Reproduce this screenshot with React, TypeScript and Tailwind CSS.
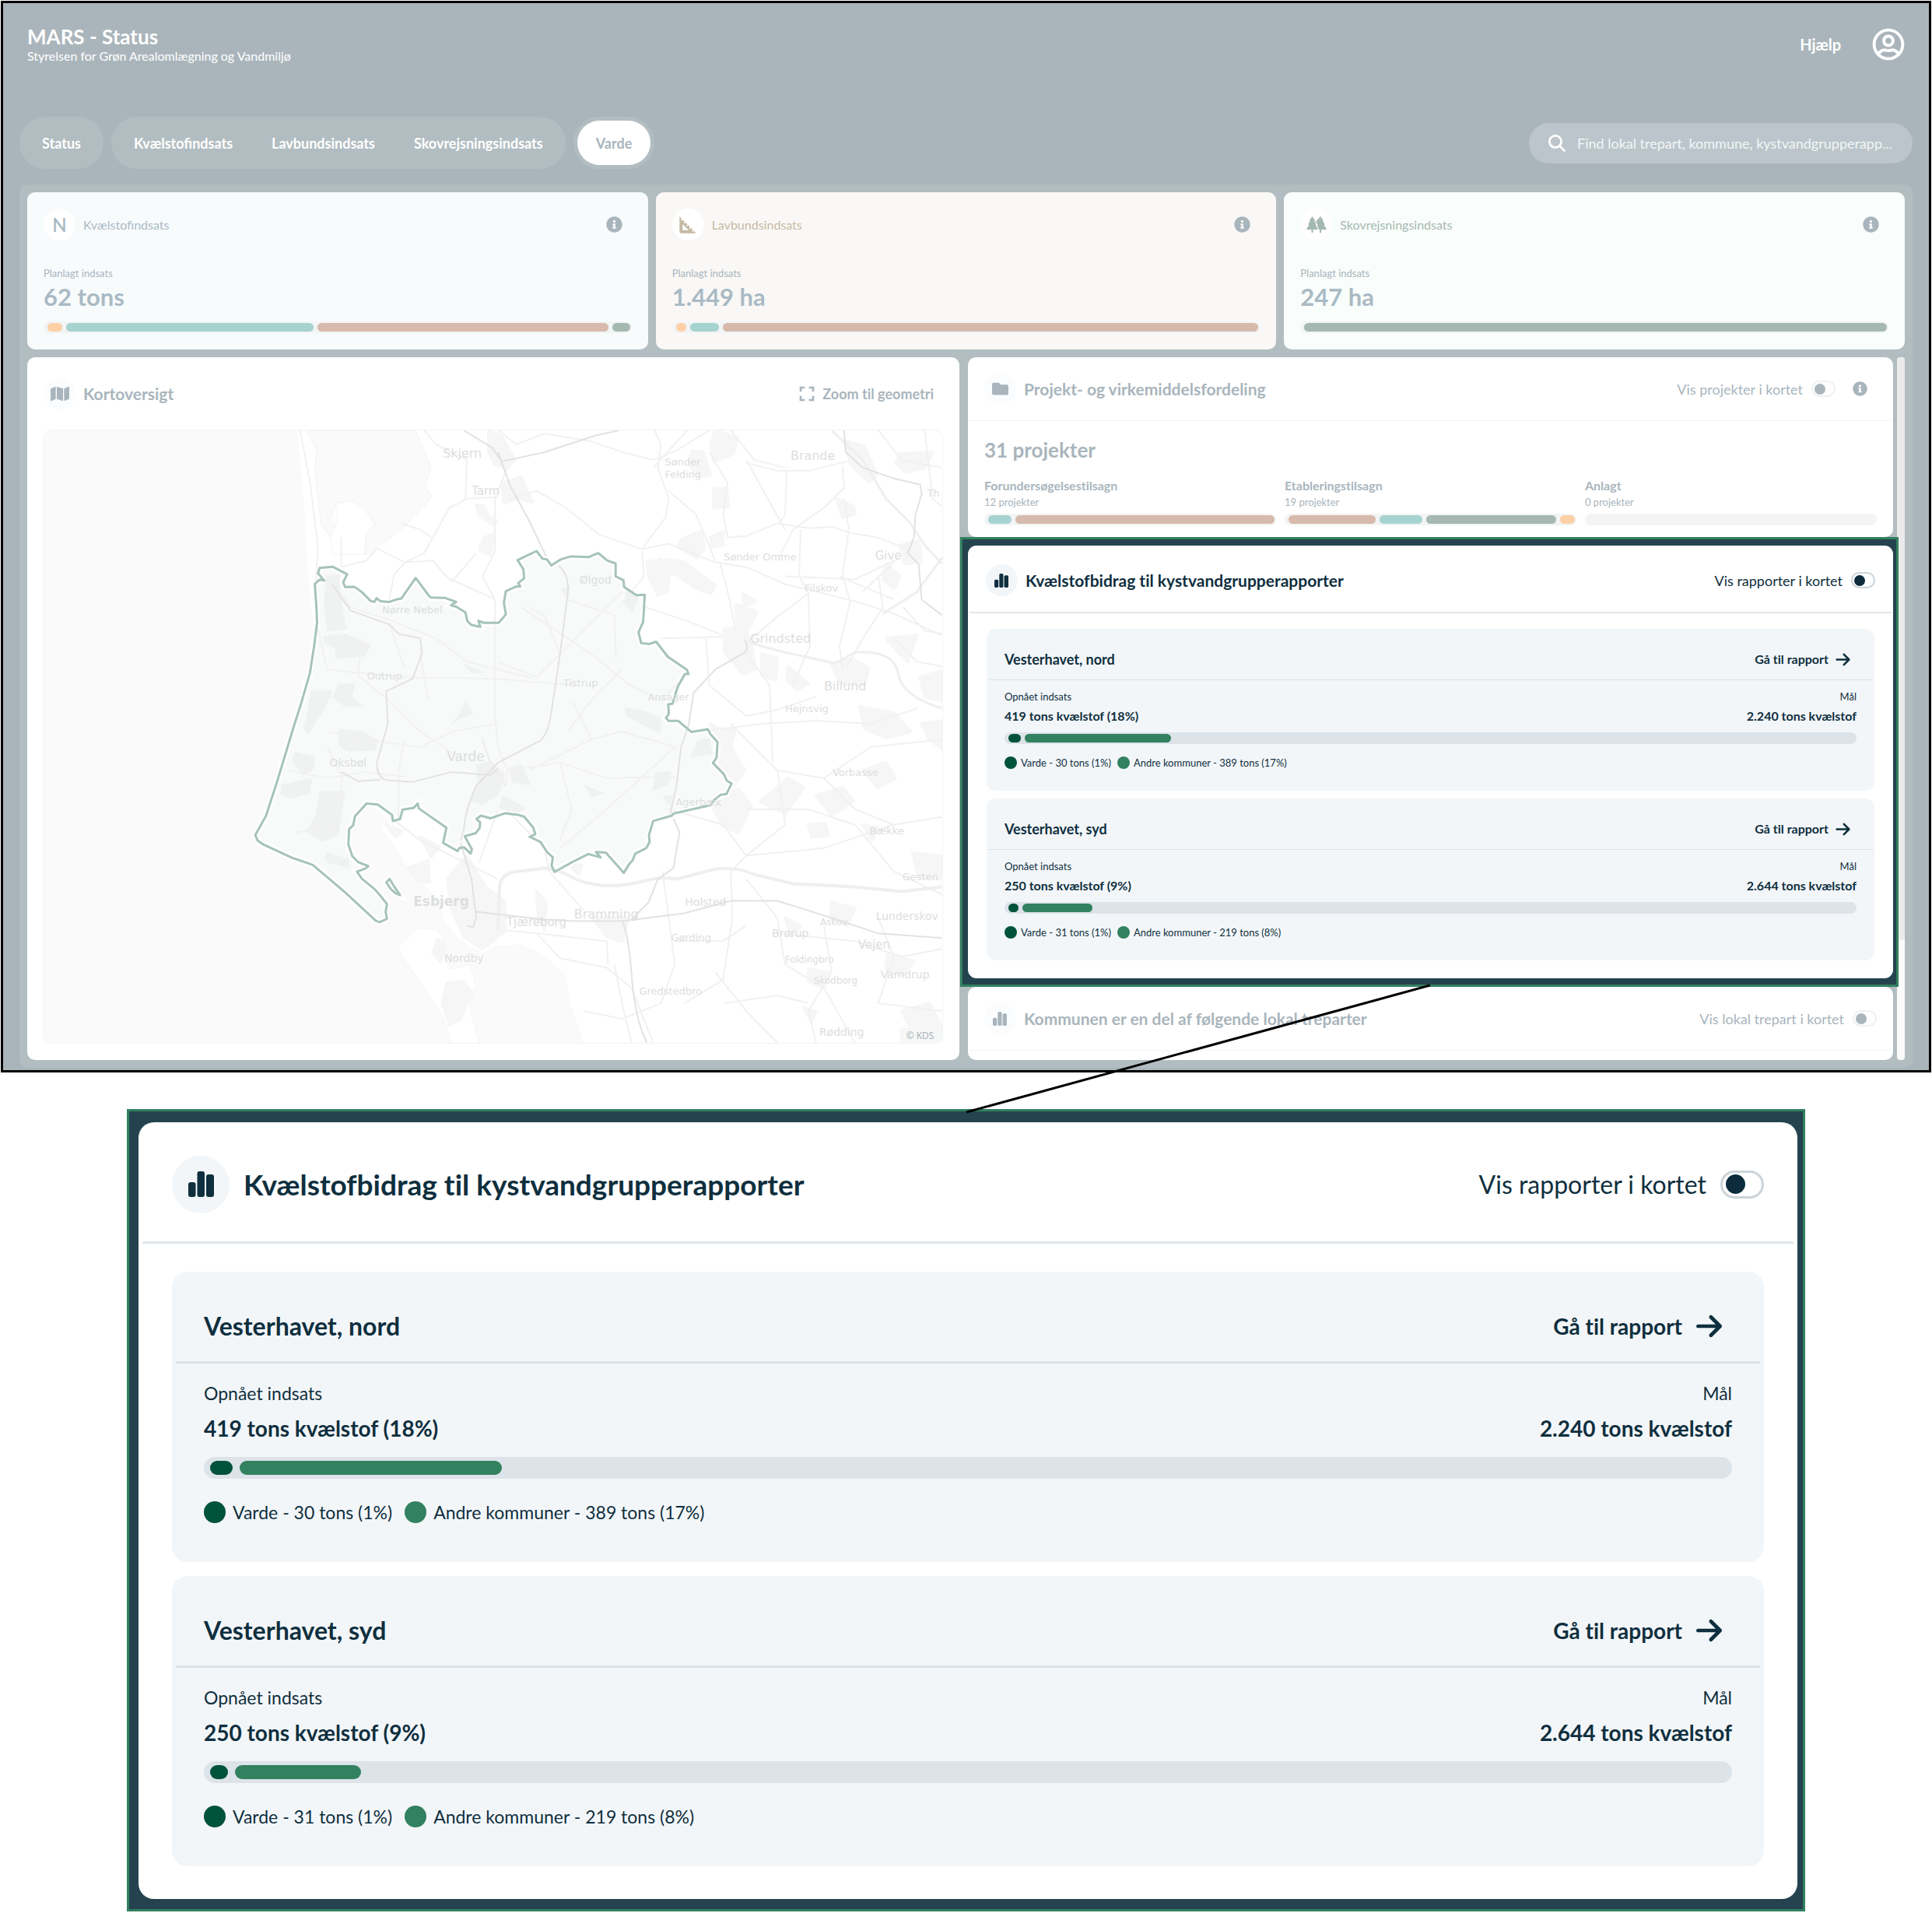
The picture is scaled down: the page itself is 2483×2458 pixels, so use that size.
import type { ReactNode } from 'react';
import clsx from 'clsx';
import { FaFolder, FaInfoCircle, FaMap, FaRegUserCircle } from 'react-icons/fa';
import { FaArrowRight, FaMagnifyingGlass } from 'react-icons/fa6';
import { MdFullscreen, MdSquareFoot } from 'react-icons/md';

type Segment = { share: number; color: string };

const SAND = 'bg-[#fdd0a6]';
const TEAL = 'bg-[#a6d3cf]';
const CLAY = 'bg-[#d7baab]';
const MOSS = 'bg-[#a5b9b0]';

const efforts = [
  {
    title: 'Kvælstofindsats',
    value: '62 tons',
    card: 'bg-[#f8fbfc]',
    tone: 'text-[#a9bac4]',
    icon: <span className="text-2xl font-semibold">N</span>,
    segments: [
      { share: 19, color: SAND },
      { share: 317, color: TEAL },
      { share: 373, color: CLAY },
      { share: 23, color: MOSS },
    ],
  },
  {
    title: 'Lavbundsindsats',
    value: '1.449 ha',
    card: 'bg-[#faf8f6]',
    tone: 'text-[#c5b9a4]',
    icon: <MdSquareFoot className="size-8" />,
    segments: [
      { share: 13, color: SAND },
      { share: 37, color: TEAL },
      { share: 686, color: CLAY },
    ],
  },
  {
    title: 'Skovrejsningsindsats',
    value: '247 ha',
    card: 'bg-[#f9fdfb]',
    tone: 'text-[#a5b9b0]',
    icon: <PinesIcon className="h-[21px] w-[26px]" />,
    segments: [{ share: 1, color: MOSS }],
  },
];

const phases: { title: string; count: string; segments: Segment[] }[] = [
  {
    title: 'Forundersøgelsestilsagn',
    count: '12 projekter',
    segments: [
      { share: 30, color: TEAL },
      { share: 333, color: CLAY },
    ],
  },
  {
    title: 'Etableringstilsagn',
    count: '19 projekter',
    segments: [
      { share: 112, color: CLAY },
      { share: 55, color: TEAL },
      { share: 167, color: MOSS },
      { share: 19, color: SAND },
    ],
  },
  { title: 'Anlagt', count: '0 projekter', segments: [] },
];

const reports = [
  {
    name: 'Vesterhavet, nord',
    reached: '419 tons kvælstof (18%)',
    goal: '2.240 tons kvælstof',
    own: 'Varde - 30 tons (1%)',
    others: 'Andre kommuner - 389 tons (17%)',
    ownShare: 1.5,
    othersShare: 17.3,
  },
  {
    name: 'Vesterhavet, syd',
    reached: '250 tons kvælstof (9%)',
    goal: '2.644 tons kvælstof',
    own: 'Varde - 31 tons (1%)',
    others: 'Andre kommuner - 219 tons (8%)',
    ownShare: 1.2,
    othersShare: 8.3,
  },
];

function BarsIcon({ className }: { className?: string }) {
  return (
    <svg viewBox="0 0 33 33" fill="currentColor" className={className} aria-hidden="true">
      <rect x="0" y="14" width="9.5" height="19" rx="3" />
      <rect x="11.5" y="0" width="9.5" height="33" rx="3" />
      <rect x="23" y="4" width="10" height="29" rx="3" />
    </svg>
  );
}

function PinesIcon({ className }: { className?: string }) {
  return (
    <svg viewBox="0 0 26 21" fill="currentColor" className={className} aria-hidden="true">
      <path d="M7.5 0 L11.5 5.5 H10 L13 10.5 H11.5 L15 17 H8.5 V21 H6.5 V17 H0 L3.5 10.5 H2 L5 5.5 H3.5 Z" />
      <path d="M18 0 L22 5.5 H20.5 L24 10.5 H22.5 L26 17 H19 V21 H17 V17 H16.2 L13.4 11.5 H15 L11.8 6.3 H13.3 L12.9 5.8 Z" />
    </svg>
  );
}

function SegmentBar({ segments }: { segments: Segment[] }) {
  return (
    <div className="flex h-[15px] gap-[5px] rounded-full bg-[#f2f4f5] py-[2px] pr-[2px] pl-[5px]">
      {segments.map((s, i) => (
        <div
          key={i}
          className={clsx('basis-0 rounded-full', s.color)}
          style={{ flexGrow: s.share }}
        />
      ))}
    </div>
  );
}

function Toggle({ label, large, faded }: { label: string; large?: boolean; faded?: boolean }) {
  return (
    <label
      className={clsx(
        'flex items-center',
        large ? 'gap-[18px] text-[32px]' : 'gap-[11px] text-lg',
      )}
    >
      {label}
      <input
        type="checkbox"
        role="switch"
        className={clsx(
          'flex appearance-none items-center rounded-full before:rounded-full',
          large
            ? 'h-9 w-14 border-[3px] px-1 before:size-[25px]'
            : 'h-[21px] w-[31px] border-2 px-[2px] before:size-[14px]',
          faded
            ? 'border-[#eef1f2] before:bg-[#a9b5bc]'
            : 'border-[#ccd4d9] before:bg-[#0c2c3c]',
        )}
      />
    </label>
  );
}

function PanelHeader({
  icon,
  title,
  children,
  className,
}: {
  icon: ReactNode;
  title: string;
  children?: ReactNode;
  className?: string;
}) {
  return (
    <div className={clsx('flex items-center justify-between pl-[21px]', className)}>
      <div className="flex items-center gap-[10px]">
        <span className="flex size-[41px] items-center justify-center rounded-full bg-[#fbfcfe]">
          {icon}
        </span>
        <h2 className="text-[21px] font-bold">{title}</h2>
      </div>
      {children}
    </div>
  );
}

function ReportPanel({ large = false }: { large?: boolean }) {
  return (
    <section
      className={clsx(
        'border-[3px] border-[#32815f] bg-[#24434f] text-[#0f2f3e]',
        large ? 'pt-[14px] pr-[7px] pb-[13px] pl-3' : 'pt-2 pr-1 pb-2 pl-[7px]',
      )}
    >
      <div
        className={clsx(
          'bg-white',
          large ? 'rounded-[20px] pb-[42px]' : 'rounded-[11px] pb-[23px]',
        )}
      >
        <div
          className={clsx(
            'flex items-center justify-between border-[#e0e6ea]',
            large
              ? 'mx-[5px] h-[156px] border-b-[3px] px-[38px] pt-[6px]'
              : 'mx-[2px] h-[87px] border-b-2 px-[21px] pt-1',
          )}
        >
          <div className={clsx('flex items-center', large ? 'gap-[18px]' : 'gap-[10px]')}>
            <span
              className={clsx(
                'flex items-center justify-center rounded-full bg-[#f3f6f9]',
                large ? 'size-[74px]' : 'size-[41px]',
              )}
            >
              <BarsIcon className={large ? 'size-[33px]' : 'size-[18px]'} />
            </span>
            <h2 className={clsx('font-bold', large ? 'text-[37px]' : 'text-[21px]')}>
              Kvælstofbidrag til kystvandgrupperapporter
            </h2>
          </div>
          <Toggle label="Vis rapporter i kortet" large={large} />
        </div>

        <div
          className={clsx(
            'flex flex-col',
            large ? 'gap-[18px] px-[43px] pt-9' : 'gap-[10px] px-6 pt-5',
          )}
        >
          {reports.map((r) => (
            <ReportCard key={r.name} report={r} large={large} />
          ))}
        </div>
      </div>
    </section>
  );
}

function ReportCard({ report, large }: { report: (typeof reports)[number]; large: boolean }) {
  const small = large ? 'text-[23px] leading-9' : 'text-[13px] leading-5';
  const strong = large ? 'text-[28px] leading-[54px]' : 'text-base leading-[30px]';
  const dot = large ? 'size-7' : 'size-4';

  return (
    <article
      className={clsx(
        'bg-[#f3f6f9]',
        large ? 'rounded-[20px] pb-[46px]' : 'rounded-[11px] pb-[26px]',
      )}
    >
      <div
        className={clsx(
          'flex items-center justify-between border-[#dbe2e7]',
          large
            ? 'mx-[5px] h-[118px] border-b-[3px] pt-[25px] pr-[49px] pl-9'
            : 'mx-[2px] h-[66px] border-b pt-[13px] pr-[29px] pl-[21px]',
        )}
      >
        <h3 className={clsx('font-bold', large ? 'text-[32px]' : 'text-lg')}>{report.name}</h3>
        <a
          href="#rapport"
          className={clsx(
            'flex items-center font-bold',
            large ? 'gap-[18px] text-[28px]' : 'gap-[9px] text-base',
          )}
        >
          Gå til rapport
          <FaArrowRight className={large ? 'h-[38px] w-[33px]' : 'h-[21px] w-[19px]'} />
        </a>
      </div>

      <div className={large ? 'px-[41px] pt-5' : 'px-[23px] pt-[11px]'}>
        <div className={clsx('flex justify-between', small)}>
          <span>Opnået indsats</span>
          <span>Mål</span>
        </div>
        <div className={clsx('flex justify-between font-bold', strong)}>
          <span>{report.reached}</span>
          <span>{report.goal}</span>
        </div>
        <div
          className={clsx(
            'flex rounded-full bg-[#dce3e9]',
            large ? 'mt-[10px] h-7 gap-[9px] px-2 py-[5px]' : 'mt-[6px] h-[15px] gap-[5px] px-[5px] py-[2px]',
          )}
        >
          <div className="rounded-full bg-[#00533b]" style={{ width: `${report.ownShare}%` }} />
          <div className="rounded-full bg-[#32815f]" style={{ width: `${report.othersShare}%` }} />
        </div>
        <div
          className={clsx(
            'flex items-center',
            small,
            large ? 'mt-[25px] gap-4' : 'mt-[14px] gap-2',
          )}
        >
          <span className={clsx('flex items-center', large ? 'gap-[9px]' : 'gap-[5px]')}>
            <i className={clsx('rounded-full bg-[#00533b]', dot)} />
            {report.own}
          </span>
          <span className={clsx('flex items-center', large ? 'gap-[9px]' : 'gap-[5px]')}>
            <i className={clsx('rounded-full bg-[#32815f]', dot)} />
            {report.others}
          </span>
        </div>
      </div>
    </article>
  );
}

const places: [string, number, number, number][] = [
  ['Skjern', 569, 587, 16],
  ['Tarm', 606, 635, 15],
  ['Nørre Nebel', 491, 788, 13],
  ['Outrup', 471, 873, 13],
  ['Oksbøl', 423, 985, 14],
  ['Varde', 574, 978, 17],
  ['Ølgod', 745, 750, 14],
  ['Tistrup', 724, 882, 13],
  ['Ansager', 833, 900, 13],
  ['Agerbæk', 869, 1035, 13],
  ['Nordby', 571, 1237, 14],
  ['Tjæreborg', 651, 1191, 15],
  ['Bramming', 738, 1181, 16],
  ['Holsted', 881, 1165, 14],
  ['Gørding', 863, 1210, 13],
  ['Gredstedbro', 822, 1279, 13],
  ['Sønder', 855, 597, 13],
  ['Felding', 855, 613, 13],
  ['Brande', 1017, 590, 16],
  ['Th', 1193, 637, 13],
  ['Sønder Omme', 931, 719, 13],
  ['Give', 1126, 718, 15],
  ['Filskov', 1035, 760, 13],
  ['Grindsted', 965, 826, 16],
  ['Billund', 1060, 887, 16],
  ['Hejnsvig', 1010, 915, 13],
  ['Vorbasse', 1071, 997, 13],
  ['Bække', 1119, 1072, 13],
  ['Gesten', 1161, 1131, 13],
  ['Lunderskov', 1127, 1183, 14],
  ['Askov', 1055, 1190, 12],
  ['Brørup', 993, 1205, 14],
  ['Vejen', 1104, 1220, 15],
  ['Foldingbro', 1010, 1238, 12],
  ['Skodborg', 1047, 1265, 12],
  ['Vamdrup', 1133, 1258, 14],
  ['Rødding', 1054, 1332, 14],
];

const municipality =
  'M247 115 L262 102 L276 105 L257 83 L262 67 L303 64 L346 86 L334 110 L340 124 L368 123 L390 138 L418 165 L430 168 L436 157 L448 166 L475 168 L500 160 L512 158 L556 97 L595 148 L602 155 L645 156 L680 168 L664 178 L680 182 L708 199 L714 224 L725 236 L754 242 L748 224 L765 230 L810 230 L822 217 L832 205 L826 170 L832 136 L865 122 L876 122 L870 112 L888 98 L886 72 L868 44 L926 17 L944 40 L958 42 L971 60 L1000 42 L1030 33 L1085 35 L1115 23 L1142 45 L1168 54 L1168 92 L1192 104 L1194 124 L1232 148 L1257 147 L1254 200 L1252 228 L1238 258 L1246 290 L1270 293 L1292 286 L1328 331 L1386 369 L1391 382 L1380 382 L1358 420 L1342 470 L1329 472 L1331 500 L1322 512 L1330 521 L1360 521 L1400 554 L1450 546 L1458 560 L1480 584 L1477 630 L1466 646 L1500 680 L1508 698 L1523 707 L1507 738 L1490 740 L1470 755 L1458 771 L1345 796 L1340 802 L1283 818 L1270 860 L1272 880 L1262 898 L1228 915 L1220 935 L1210 945 L1193 972 L1175 952 L1138 912 L1108 910 L1122 926 L1084 916 L1035 940 L981 969 L972 950 L976 926 L958 910 L938 880 L905 865 L922 857 L916 838 L888 805 L870 800 L830 795 L785 810 L756 802 L742 812 L753 822 L752 838 L740 854 L706 863 L728 902 L724 915 L704 896 L690 898 L684 907 L640 883 L650 838 L566 781 L562 766 L550 779 L516 784 L508 812 L486 818 L484 800 L440 769 L406 766 L370 804 L365 830 L352 842 L350 888 L362 922 L380 940 L411 952 L400 960 L376 968 L392 990 L430 1020 L448 1040 L468 1064 L464 1088 L468 1108 L446 1118 L434 1114 L340 1030 L272 974 L240 948 L180 928 L90 888 L72 876 L65 860 L98 802 L132 700 L182 540 L205 470 L232 380 L245 300 L254 230 L252 180 Z M466 1000 L476 990 L486 1006 L508 1038 L494 1032 L480 1020 Z';

function RegionMap() {
  return (
    <svg
      viewBox="55 552 1158 789"
      preserveAspectRatio="xMidYMid slice"
      className="block h-[789px] w-full rounded-[10px] border border-[#f1f5f4]"
      role="img"
      aria-label="Kort over Varde Kommune"
    >
      {/* sea and fjords */}
      <path
        fill="#fafafa"
        d="M55 552 H381 L386 600 L392 670 L394 720 L400 780 L404 830 L399 830 L402 870 L398 900 L380 1000 L345 1060 L327 1073 L401 1112 L483 1184 L497 1180 L490 1150 L460 1120 L447 1085 L447 1065 L470 1033 L505 1055 L492 1062 L492 1070 L505 1085 L520 1110 L550 1142 L566 1160 L570 1182 L590 1208 L620 1225 L637 1216 L670 1214 L696 1226 L727 1252 L733 1290 L740 1310 L751 1341 H55 Z"
      />
      <path
        fill="#fafafa"
        stroke="#f3f3f3"
        d="M393 552 L406 577 L404 605 L408 640 L412 673 L422 687 L427 700 L430 672 L424 668 L432 645 L455 643 L468 650 L482 672 L470 690 L469 712 L480 712 L484 703 L516 680 L543 652 L555 637 L546 624 L554 600 L543 574 L534 552 Z"
      />
      <path
        fill="#fff"
        stroke="#f4f4f4"
        d="M433 646 L452 643 L466 652 L480 672 L470 686 L468 712 L428 712 L424 690 L432 672 Z M512 1217 L536 1193 L560 1195 L570 1208 L566 1222 L580 1246 L604 1240 L611 1266 L603 1295 L616 1341 H580 L570 1308 L540 1262 L516 1230 Z"
      />

      {/* woods and built-up areas */}
      <g fill="#f6f6f6" stroke="#f6f6f6" strokeWidth="4" strokeLinejoin="round">
        <path d="M628 552 L645 560 L662 590 L652 600 L636 596 L628 580 Z M645 620 L670 612 L684 644 L664 640 L648 646 Z" />
        <path d="M612 648 L622 650 L628 664 L638 668 L636 674 L616 662 Z M622 690 L634 686 L630 712 L616 706 Z" />
        <path d="M920 552 L948 562 L944 582 L918 592 L914 570 Z M890 578 L905 580 L914 610 L898 612 L886 596 Z" />
        <path d="M918 628 L934 626 L938 650 L918 652 Z M876 692 L902 682 L906 704 L896 716 L872 702 Z M914 690 L930 682 L930 700 L916 702 Z" />
        <path d="M832 722 L850 718 L862 730 L880 740 L862 736 L858 760 L846 764 L834 740 Z M856 718 L880 722 L920 752 L914 762 L896 756 L876 742 Z" />
        <path d="M932 808 L958 806 L966 826 L972 860 L956 866 L932 838 Z M946 776 L974 786 L962 808 L948 804 Z M955 762 L972 772 L958 778 Z" />
        <path d="M980 840 L1000 846 L998 874 L980 868 Z M1014 856 L1040 878 L1026 886 L1012 874 Z M1070 852 L1096 846 L1118 858 L1112 880 L1080 878 Z" />
        <path d="M1088 566 L1112 572 L1128 610 L1118 618 L1094 596 Z M1158 582 L1200 580 L1190 600 L1166 606 L1152 594 Z M1158 700 L1182 694 L1186 722 L1164 724 Z" />
        <path d="M1076 640 L1098 650 L1100 660 L1084 664 Z M1140 724 L1158 740 L1150 756 L1136 744 Z M1140 820 L1180 816 L1168 850 L1154 836 Z M1184 870 L1212 862 V900 L1190 896 Z" />
        <path d="M1106 908 L1150 916 L1172 940 L1140 948 L1112 936 Z M1186 930 L1212 926 V962 L1196 950 Z" />
        <path d="M914 930 L930 940 L946 936 L940 960 L958 990 L944 1010 L930 990 L918 960 Z M912 1030 L950 1014 L966 1036 L950 1070 L930 1062 Z M978 1030 L1014 1000 L1034 1012 L1010 1046 Z" />
        <path d="M1050 1022 L1084 1012 L1098 1030 L1070 1048 Z M1110 990 L1140 980 L1152 1000 L1130 1012 Z M1040 1060 L1062 1058 L1066 1074 L1044 1076 Z" />
        <path d="M1174 1096 L1212 1100 V1130 L1182 1128 Z M1070 1160 L1100 1168 L1090 1190 L1068 1180 Z M1010 1180 L1030 1190 L1018 1204 Z M1110 1060 L1130 1064 L1122 1080 Z" />
        <path d="M1142 1226 L1176 1236 L1160 1254 L1140 1246 Z M1040 1246 L1066 1250 L1060 1270 L1040 1262 Z M1160 1300 L1196 1290 L1212 1320 L1176 1330 Z M1034 1296 L1050 1300 L1044 1314 Z" />
        <path d="M575 1130 L600 1100 L624 1140 L648 1158 L650 1196 L620 1220 L596 1204 L580 1168 Z M524 1116 L550 1106 L552 1134 L536 1132 Z" />
        <path d="M540 1076 L564 1088 L554 1102 Z M690 1146 L702 1160 L700 1196 L692 1180 Z M762 1180 L808 1180 L800 1210 L780 1204 Z M496 1060 L516 1068 L508 1076 Z" />
        <path d="M574 1264 L594 1262 L606 1276 L592 1310 L578 1318 L568 1290 Z M562 1208 L574 1214 L566 1236 L556 1226 Z M730 1110 L748 1112 L744 1124 Z" />
      </g>

      {/* municipality */}
      <g transform="translate(300 700) scale(.4209 .4342)">
        <path d={municipality} fill="#f8faf9" stroke="#fff" strokeWidth="8" vectorEffect="non-scaling-stroke" />
        <g fill="#f0f2f1">
          <path d="M280 90 L322 85 L325 140 L345 250 L285 255 L275 180 Z M273 270 L340 262 L420 295 L400 330 L310 338 L308 305 L276 290 Z" />
          <path d="M236 430 L302 430 L275 490 L228 560 L212 545 L225 490 Z M320 410 L372 410 L360 450 L400 480 L340 480 L300 450 Z M320 545 L390 552 L445 580 L430 610 L345 612 L318 590 Z" />
          <path d="M186 612 L250 628 L240 670 L212 684 L178 640 Z M145 710 L240 690 L232 738 L170 752 L142 736 Z M262 730 L340 728 L320 860 L270 880 L220 850 L250 800 Z M280 910 L350 930 L352 958 L280 940 Z" />
          <path d="M710 460 L732 500 L690 515 L658 538 L690 500 Z M700 350 L766 378 L730 382 Z M1195 480 L1250 490 L1305 510 L1308 560 L1245 530 L1200 505 Z M1000 130 L1030 120 L1020 160 Z" />
          <path d="M740 650 L790 640 L830 680 L810 740 L760 770 L720 760 L745 700 Z M840 660 L880 650 L910 712 L850 705 Z M820 740 L895 780 L870 795 L810 780 Z M1290 672 L1340 670 L1330 710 L1280 730 Z M1070 710 L1135 735 L1095 748 Z" />
          <path d="M1200 130 L1240 150 L1220 200 L1196 180 Z M1395 630 L1420 580 L1455 570 L1465 620 Z M1310 745 L1345 740 L1335 775 Z" />
        </g>
      </g>

      {/* local roads */}
      <g fill="none" stroke="#f1f1f1" strokeWidth="2" strokeLinejoin="round">
        <path d="M385 552 L398 620 L408 700 L405 760 M438 690 V728 L470 720 L484 704 L520 722 L556 720 L575 742 L620 762 L636 770 M500 770 L506 738 L520 722 L545 710 L577 652 L600 640 L640 638" />
        <path d="M545 552 L560 570 L600 590 L598 640 M516 672 L540 680 L557 692 M640 552 L664 570 L700 556 L760 566 L800 580 L840 590 L870 578 L912 552 M636 640 L652 600" />
        <path d="M636 640 L636 708 L620 740 L636 770 V920 L640 960 L652 990 L650 1010 M612 710 L580 748 M655 640 L690 630 L728 652 L770 686 L825 705 L860 698 L920 722 L960 728 L1010 750 L1100 772 L1150 788 L1212 816" />
        <path d="M842 552 L850 570 L846 600 L860 640 L856 664 L826 704 M860 630 L895 660 L920 720 M935 690 L960 688 L1000 672 L1040 678 L1070 676 L1094 684 L1130 690 L1170 706 M884 552 L840 600" />
        <path d="M912 580 L936 620 L930 660 L936 690 M960 590 L1010 680 M960 594 L1000 604 L1040 604 L1090 592 M1084 598 L1086 626 L1062 650 L1020 680 L1000 720 M1012 604 L1010 660 L1002 672" />
        <path d="M1030 680 L1028 740 L1040 762 L1042 830 L1020 880 M1086 640 L1092 680 L1084 740 L1094 772 L1080 830 L1084 860 M1130 740 L1136 780 L1110 820 L1090 856" />
        <path d="M926 722 L938 768 L946 810 M960 826 L1000 792 L1040 762 M850 820 L930 818 M826 708 L828 740 L796 780 M830 780 L880 796 L930 816 M1010 740 L1100 744 L1158 716 M1080 740 L1150 770" />
        <path d="M908 820 L912 880 L960 920 L1000 912 L1050 895 M960 840 L990 880 L994 980 M900 940 L980 930 L1050 926 L1120 930 L1180 910 M940 930 L1000 990 L1060 1000 L1120 960 L1212 950" />
        <path d="M1060 1000 L1100 1040 L1150 1060 L1212 1050 M960 1040 L1040 1040 L1100 1060 L1150 1120 L1212 1150 M1000 990 L1010 1060 L960 1100 L940 1120 M860 1040 L930 1060 L960 1100 L1060 1090 L1150 1060" />
        <path d="M1150 820 L1180 850 L1212 856 M1162 780 L1190 810 L1212 814 M1150 722 L1110 760 M1130 552 L1160 590 L1212 600 M1190 552 L1200 640 L1212 650 M940 552 L970 590 L1010 600" />
        <path d="M500 1050 L540 1080 L600 1110 L640 1130 M616 1108 L640 1040 M650 1040 L700 1090 L706 1120 L750 1170 M650 1196 L690 1200 L720 1232 L780 1244 L812 1270 L840 1341 M690 1200 L780 1210 L782 1240" />
        <path d="M852 1120 L860 1180 L868 1240 L850 1290 L800 1310 L750 1300 M868 1210 L930 1210 L960 1190 M940 1120 L942 1180 L930 1260 L880 1290 M790 1240 L800 1290 L812 1341 M920 1250 L960 1300 L1000 1341" />
        <path d="M960 1130 L1000 1180 L1010 1240 L1060 1270 L1100 1341 M1000 1200 L1100 1210 L1160 1230 L1212 1220 M1060 1190 L1070 1250 L1040 1300 L1050 1341 M1130 1180 L1150 1230 L1130 1290 L1212 1300 M930 1290 L1000 1280 L1040 1290" />
        <path d="M406 800 L420 860 L520 870 L640 872 L736 880 M430 750 L450 780 L500 796 L560 820 L600 850 L680 870 M500 800 L520 860 M464 820 L460 868 L500 900 L540 940 L600 980 M540 840 L550 900 M640 850 L690 870 L720 840 L800 760" />
        <path d="M670 780 L760 840 L810 880 L850 900 L880 870 M730 770 L790 790 L792 846 M736 900 L760 950 L800 940 L870 960 M680 990 L760 950 M652 990 L720 980 L780 1000 L868 998 M868 960 L780 1040 L720 1090 M720 980 L735 1040 L720 1080" />
        <path d="M640 930 L580 940 L540 960 L470 950 L420 940 M512 1060 V990 L520 950 M720 840 L700 790 L680 780 M800 860 L760 900 L730 940 M420 960 L440 1000 L430 1060 L380 1070 M370 990 L420 1000 L470 992 L520 998" />
      </g>

      {/* trunk roads */}
      <g fill="none" stroke="#efefef" strokeWidth="4" strokeLinejoin="round">
        <path d="M640 1196 L642 1140 Q644 1124 660 1121 L700 1116 Q720 1118 740 1130 Q780 1146 830 1132 Q850 1126 870 1130 L920 1117 Q950 1114 970 1124 L1020 1136 L1100 1140 L1160 1146 L1212 1140" />
        <path d="M1070 552 L1110 590 L1140 640 L1170 670 L1190 700 L1212 724 M965 826 L1010 838 L1074 852 L1100 838 Q1150 834 1156 866 Q1160 894 1212 910" strokeWidth="3" />
        <path d="M1212 716 L1180 760 L1136 788 M650 1010 L630 980 L620 950" strokeWidth="3" />
      </g>

      {/* railways */}
      <g fill="none" stroke="#e2e2e2" strokeWidth="2" strokeLinejoin="round">
        <path d="M596 552 L632 574 L645 592 L700 580 L768 558 L796 552 M640 580 L656 624 L680 668 L702 714" />
        <path d="M718 726 Q732 738 730 762 L720 840 L708 920 Q704 944 694 952 L640 980 L612 1010 Q598 1040 596 1066 L592 1080 M592 1084 L606 1130 L612 1180 L608 1192 L600 1190" />
        <path d="M426 750 L450 784 L500 802 L512 814 L540 820 L542 840 L530 872 L496 888 L498 930 L484 980 Q484 1002 500 1003 L530 1005 L580 992 L630 996 L640 988 M438 992 L460 1004 L488 1002" />
        <path d="M612 1172 L700 1182 L740 1184 L800 1184 L880 1174 L940 1158 L1000 1158 L1070 1180 L1130 1200 L1212 1206 M800 1184 Q808 1200 812 1250 Q816 1310 832 1341 M812 1182 L834 1160 L846 1130 L866 1116 L874 1070 L866 1052" />
        <path d="M862 1046 L870 1010 L876 960 L886 930 L892 890 L920 860 L958 838 Q964 832 958 822 M1086 552 L1088 580 L1110 600 L1150 614 L1184 622 L1186 634 L1178 660 L1176 690 L1168 710 L1182 724 L1186 770 L1212 790" />
      </g>

      <g transform="translate(300 700) scale(.4209 .4342)">
        <path d={municipality} fill="none" stroke="#a6c3b9" strokeWidth="3" strokeLinejoin="round" vectorEffect="non-scaling-stroke" />
      </g>

      <g fill="#dcdede" fontFamily="'DejaVu Sans', sans-serif">
        {places.map(([name, x, y, size]) => (
          <text key={name} x={x} y={y} fontSize={size}>
            {name}
          </text>
        ))}
        <text x="531" y="1165" fontSize="17" fontWeight="bold">
          Esbjerg
        </text>
      </g>
      <rect x="1158" y="1321" width="55" height="20" fill="#f6f7f7" />
      <text x="1166" y="1336" fontSize="12" fill="#a9b2b6" fontFamily="'Noto Sans', sans-serif">
        © KDS
      </text>
    </svg>
  );
}

export default function App() {
  return (
    <div className="relative bg-white pb-[2px] font-['Lato',sans-serif] [font-variant-ligatures:none]">
      <div className="px-px pt-px">
        <div className="border-[3px] border-black bg-[#aab5bb] px-[21px] pb-[3px] text-[#a9b5bc]">
          <header className="flex h-[146px] items-start justify-between px-[10px] pt-7 text-white">
            <div>
              <h1 className="text-[26px] leading-[30px] font-bold">MARS - Status</h1>
              <p className="text-base leading-5">Styrelsen for Grøn Arealomlægning og Vandmiljø</p>
            </div>
            <div className="flex h-[50px] items-center gap-10">
              <a href="#hjaelp" className="text-xl font-bold">
                Hjælp
              </a>
              <button type="button" aria-label="Profil">
                <FaRegUserCircle className="size-[42px]" />
              </button>
            </div>
          </header>

          <div className="mb-5 flex items-center justify-between">
            <nav className="flex gap-[10px] text-lg font-bold text-white [font-variant-ligatures:normal]">
              <div className="flex h-[67px] items-center rounded-full bg-[#b2bdc1] px-[29px]">
                <a href="#status">Status</a>
              </div>
              <div className="flex h-[67px] items-center gap-[50px] rounded-full bg-[#b2bdc1] px-[29px]">
                <a href="#kvaelstof">Kvælstofindsats</a>
                <a href="#lavbund">Lavbundsindsats</a>
                <a href="#skov">Skovrejsningsindsats</a>
              </div>
              <div className="flex h-[67px] rounded-full bg-[#b2bdc1] p-[5px]">
                <a
                  href="#varde"
                  className="flex items-center rounded-full bg-white px-6 text-[#a9b5bc]"
                >
                  Varde
                </a>
              </div>
            </nav>
            <label className="flex h-[52px] w-[493px] items-center gap-[15px] rounded-full bg-[#bbc5cb] px-[25px] text-white">
              <FaMagnifyingGlass className="size-[22px] shrink-0" />
              <input
                type="text"
                aria-label="Søg"
                placeholder="Find lokal trepart, kommune, kystvandgrupperapp..."
                className="min-w-0 flex-1 bg-transparent text-lg outline-none placeholder:text-[#f3f5f6]"
              />
            </label>
          </div>

          <main className="flex flex-col gap-[10px] rounded-[10px] bg-[#b2bdc1] p-[10px]">
            <div className="grid grid-cols-3 gap-[10px]">
              {efforts.map((e) => (
                <section key={e.title} className={clsx('rounded-[10px] p-[21px]', e.card)}>
                  <div className={clsx('flex items-center gap-[10px]', e.tone)}>
                    <span className="flex size-[41px] items-center justify-center rounded-full bg-white">
                      {e.icon}
                    </span>
                    <h2 className="text-base [font-variant-ligatures:normal]">{e.title}</h2>
                    <button type="button" aria-label="Info" className="mr-3 ml-auto text-[#a9b5bc]">
                      <FaInfoCircle className="size-[21px]" />
                    </button>
                  </div>
                  <p className="mt-8 text-[13px] leading-5">Planlagt indsats</p>
                  <p className="mb-3 text-[31px] leading-10 font-bold text-[#a9bac4]">{e.value}</p>
                  <SegmentBar segments={e.segments} />
                </section>
              ))}
            </div>

            <div className="grid grid-cols-[199fr_200fr] gap-[11px]">
              <section className="rounded-[10px] bg-white pb-[21px]">
                <PanelHeader
                  icon={<FaMap className="size-6" />}
                  title="Kortoversigt"
                  className="h-[93px] pr-[33px]"
                >
                  <button type="button" className="flex items-center gap-1 text-lg font-bold">
                    <MdFullscreen className="size-8" />
                    Zoom til geometri
                  </button>
                </PanelHeader>
                <div className="px-[21px]">
                  <RegionMap />
                </div>
              </section>

              <div className="flex gap-[5px]">
                <div className="flex min-w-0 flex-1 flex-col">
                  <section className="rounded-[10px] bg-white pb-[15px]">
                    <PanelHeader
                      icon={<FaFolder className="size-[21px]" />}
                      title="Projekt- og virkemiddelsfordeling"
                      className="h-[82px] border-b border-[#f3f5f6] pr-[33px]"
                    >
                      <div className="flex items-center gap-[22px]">
                        <Toggle label="Vis projekter i kortet" faded />
                        <button type="button" aria-label="Info">
                          <FaInfoCircle className="size-[19px]" />
                        </button>
                      </div>
                    </PanelHeader>
                    <div className="px-[21px] pt-[19px]">
                      <p className="text-[26px] leading-9 font-bold">31 projekter</p>
                      <div className="mt-[17px] grid grid-cols-3 gap-[11px]">
                        {phases.map((p) => (
                          <div key={p.title}>
                            <h3 className="text-base leading-[22px] font-bold">{p.title}</h3>
                            <p className="mb-[5px] text-[13px] leading-5">{p.count}</p>
                            <SegmentBar segments={p.segments} />
                          </div>
                        ))}
                      </div>
                    </div>
                  </section>

                  <div className="relative -mr-[7px] -ml-[10px]">
                    <ReportPanel />
                  </div>

                  <section className="h-[94px] rounded-[10px] bg-white">
                    <PanelHeader
                      icon={<BarsIcon className="size-[18px]" />}
                      title="Kommunen er en del af følgende lokal treparter"
                      className="h-[82px] border-b border-[#f3f5f6] pr-[21px]"
                    >
                      <Toggle label="Vis lokal trepart i kortet" faded />
                    </PanelHeader>
                  </section>
                </div>

                {/* Scrollbar */}
                <div className="w-[10px] rounded-sm bg-[#fbfbfb]">
                  <div className="h-[83%] rounded-sm bg-[#ebebeb]" />
                </div>
              </div>
            </div>
          </main>
        </div>
      </div>

      <div className="px-[163px] pt-[47px]">
        <ReportPanel large />
      </div>

      {/* Leader line between the panel and its enlarged copy */}
      <svg className="absolute top-[1266px] left-1/2 h-[163px] w-[24%] overflow-visible" aria-hidden="true">
        <line x1="100%" y1="0" x2="0" y2="100%" stroke="#000" strokeWidth="3" />
      </svg>
    </div>
  );
}
